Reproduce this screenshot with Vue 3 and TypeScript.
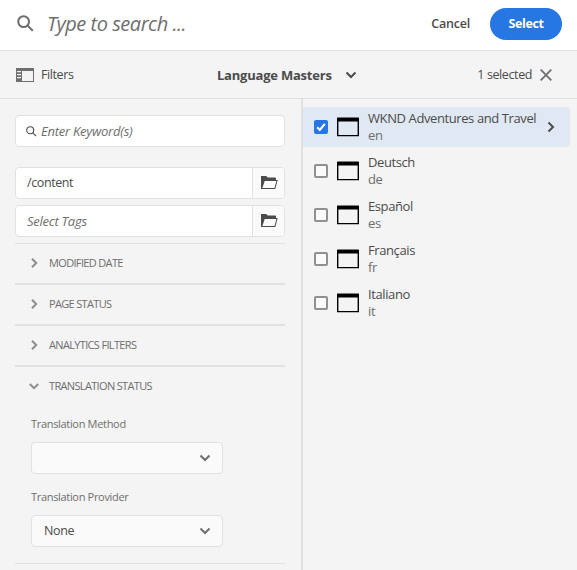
<script setup lang="ts">
import { ref } from 'vue'

interface PageItem {
  title: string
  name: string
  hasChildren: boolean
}

const sections: string[] = ['Modified Date', 'Page Status', 'Analytics Filters']

const pages: PageItem[] = [
  { title: 'WKND Adventures and Travel', name: 'en', hasChildren: true },
  { title: 'Deutsch', name: 'de', hasChildren: false },
  { title: 'Español', name: 'es', hasChildren: false },
  { title: 'Français', name: 'fr', hasChildren: false },
  { title: 'Italiano', name: 'it', hasChildren: false },
]

const selected = ref<string>('en')
const path = ref<string>('/content')
</script>

<template>
  <div class="picker">
    <header class="searchbar">
      <svg class="search-icon" width="17" height="17" viewBox="0 0 17 17">
        <circle cx="6.6" cy="6.6" r="5.4" />
        <path d="M10.6 10.6 L15.8 15.8" />
      </svg>
      <input class="search-input" placeholder="Type to search ..." />
      <button class="cancel">Cancel</button>
      <button class="select">Select</button>
    </header>

    <div class="toolbar">
      <svg class="rail-icon" width="18" height="14" viewBox="0 0 18 14">
        <path fill-rule="evenodd" d="M0 0H18V14H0Z M6 3H17V13H6Z M1 3H5V4.3H1Z M1 6H5V7.3H1Z M1 9H5V10.3H1Z" />
      </svg>
      <span class="filters">Filters</span>
      <span class="location">Language Masters</span>
      <svg class="location-arrow" width="12" height="8" viewBox="0 0 12 8">
        <path d="M1.5 1.5 L6 6 L10.5 1.5" />
      </svg>
      <span class="count">1 selected</span>
      <svg class="close" width="12" height="12" viewBox="0 0 12 12">
        <path d="M.7 .7 L11.3 11.3 M11.3 .7 L.7 11.3" />
      </svg>
    </div>

    <main class="content">
      <aside class="rail">
        <div class="field keyword">
          <svg class="keyword-icon" width="11" height="11" viewBox="0 0 11 11">
            <circle cx="4.2" cy="4.2" r="3.5" />
            <path d="M6.8 6.8 L10.1 10.1" />
          </svg>
          <input class="field-input enter" placeholder="Enter Keyword(s)" />
        </div>
        <div class="field">
          <input v-model="path" class="field-input path" />
          <span class="browse">
            <svg width="17" height="13" viewBox="0 0 17 13">
              <path fill-rule="evenodd" d="M0 0H5.2L6.8 1.5H14.2Q15 1.5 15 2.3V4H16.7L14.3 13H0Z M3.7 5L1.4 12H13.5L15.4 5Z" />
            </svg>
          </span>
        </div>
        <div class="field tags">
          <input class="field-input tag-input" placeholder="Select Tags" />
          <span class="browse">
            <svg width="17" height="13" viewBox="0 0 17 13">
              <path fill-rule="evenodd" d="M0 0H5.2L6.8 1.5H14.2Q15 1.5 15 2.3V4H16.7L14.3 13H0Z M3.7 5L1.4 12H13.5L15.4 5Z" />
            </svg>
          </span>
        </div>

        <div class="accordion">
          <div v-for="section in sections" :key="section" class="section-head">
            <svg class="arrow" width="12" height="12" viewBox="0 0 12 12">
              <path d="M4 1.8 L8.2 6 L4 10.2" />
            </svg>
            <span>{{ section }}</span>
          </div>
          <div class="section-head open">
            <svg class="arrow" width="12" height="12" viewBox="0 0 12 12">
              <path d="M1.8 4 L6 8.2 L10.2 4" />
            </svg>
            <span>Translation Status</span>
          </div>
          <div class="section-body">
            <label class="label">Translation Method</label>
            <div class="dropdown">
              <span></span>
              <svg width="12" height="8" viewBox="0 0 12 8"><path d="M1.5 1.5 L6 6 L10.5 1.5" /></svg>
            </div>
            <label class="label provider">Translation Provider</label>
            <div class="dropdown">
              <span>None</span>
              <svg width="12" height="8" viewBox="0 0 12 8"><path d="M1.5 1.5 L6 6 L10.5 1.5" /></svg>
            </div>
          </div>
        </div>
      </aside>

      <section class="column">
        <div
          v-for="page in pages"
          :key="page.name"
          class="item"
          :class="{ active: selected === page.name }"
          @click="selected = page.name"
        >
          <span class="checkbox">
            <svg v-if="selected === page.name" width="10" height="10" viewBox="0 0 10 10">
              <path d="M1.2 5.3 L3.8 8 L8.8 1.8" />
            </svg>
          </span>
          <svg class="page-icon" width="22" height="20" viewBox="0 0 22 20">
            <path fill-rule="evenodd" d="M.5 .4H21.5Q22 .4 22 1V18.7Q22 19.2 21.5 19.2H.5Q0 19.2 0 18.7V1Q0 .4 .5 .4Z M1.4 4.6H20.6V18H1.4Z" />
          </svg>
          <div class="names">
            <span class="title">{{ page.title }}</span>
            <span class="name">{{ page.name }}</span>
          </div>
          <svg v-if="page.hasChildren" class="more" width="8" height="12" viewBox="0 0 8 12">
            <path d="M1.5 1.5 L6 6 L1.5 10.5" />
          </svg>
        </div>
      </section>
    </main>
  </div>
</template>

<style>
body {
  margin: 0;
  background: #f4f4f4;
}
</style>

<style scoped>
* {
  box-sizing: border-box;
}
.picker {
  display: flex;
  flex-direction: column;
  height: 570px;
  overflow: hidden;
  background: #f4f4f4;
  color: #4b4b4b;
  font: 12.5px/16px "Open Sans", "Noto Sans", sans-serif;
  letter-spacing: -0.4px;
  white-space: nowrap;
}
svg {
  display: block;
  flex: none;
}
input,
button {
  padding: 0;
  border: 0;
  background: none;
  color: inherit;
  font: inherit;
  letter-spacing: inherit;
  outline: none;
}
.searchbar {
  display: flex;
  align-items: center;
  flex: none;
  height: 51px;
  padding: 0 15px 3px 17px;
  border-bottom: 1px solid #dedede;
  background: #fff;
}
.search-icon,
.keyword-icon {
  fill: none;
  stroke: #6e6e6e;
  stroke-width: 2;
}
.search-input {
  flex: 1;
  min-width: 0;
  height: 32px;
  margin-left: 13px;
  font-size: 20px;
  font-style: italic;
  letter-spacing: -0.47px;
}
input::placeholder {
  color: #6e6e6e;
  opacity: 1;
}
.cancel {
  margin-right: 20px;
  font-weight: 600;
  letter-spacing: -0.2px;
}
.select {
  width: 72px;
  height: 32px;
  border-radius: 16px;
  background: #2676e3;
  color: #fff;
  font-weight: 700;
}
.toolbar {
  display: flex;
  align-items: center;
  flex: none;
  height: 48px;
  padding: 0 25px 0 16px;
  border-bottom: 1px solid #dedede;
}
.rail-icon {
  fill: #6e6e6e;
}
.filters {
  width: 176px;
  padding-left: 7px;
}
.location {
  width: 135px;
  padding-left: 7px;
  font-size: 13px;
  font-weight: 700;
  letter-spacing: -0.22px;
}
.location-arrow,
.close {
  fill: none;
  stroke: #4b4b4b;
  stroke-width: 2;
}
.close {
  margin-left: 8px;
  stroke: #6e6e6e;
  stroke-width: 1.8;
}
.count {
  margin-left: auto;
}
.content {
  display: flex;
  flex: 1;
  min-height: 0;
}
.rail {
  width: 303px;
  padding: 16px 16px 0 15px;
  border-right: 2px solid #e1e1e1;
}
.field {
  display: flex;
  align-items: center;
  width: 270px;
  height: 32px;
  border: 1px solid #e1e1e1;
  border-radius: 4px;
  background: #fff;
  overflow: hidden;
}
.keyword {
  margin-bottom: 20px;
  padding-left: 10px;
}
.keyword-icon {
  stroke: #4b4b4b;
  stroke-width: 1.1;
}
.field-input {
  flex: 1;
  min-width: 0;
  height: 30px;
  padding: 0 0 1px 11px;
}
.field-input.enter {
  padding-left: 4px;
}
.enter,
.tag-input {
  font-size: 13px;
  font-style: italic;
  letter-spacing: -0.25px;
}
.tags {
  margin-top: 6px;
}
.browse {
  display: flex;
  align-items: center;
  justify-content: center;
  width: 32px;
  height: 30px;
  padding: 0 0 1px 1px;
  border-left: 1px solid #e1e1e1;
  background: #fafafa;
  fill: #4b4b4b;
}
.accordion {
  width: 270px;
  margin-top: 6px;
  border-top: 1px solid #e1e1e1;
  border-bottom: 1px solid #e1e1e1;
}
.section-head {
  display: flex;
  align-items: center;
  gap: 9px;
  height: 41px;
  padding: 0 0 2px 13px;
  border-bottom: 2px solid #e1e1e1;
  color: #6e6e6e;
  font-size: 11px;
  letter-spacing: -0.66px;
  text-transform: uppercase;
}
.section-head.open {
  border-bottom-color: transparent;
}
.arrow,
.dropdown svg {
  fill: none;
  stroke: #8e8e8e;
  stroke-width: 2;
}
.section-body {
  padding: 8px 16px 16px;
}
.label {
  display: block;
  height: 26px;
  color: #6e6e6e;
  font-size: 11px;
  letter-spacing: -0.32px;
}
.provider {
  margin-top: 15px;
}
.dropdown {
  display: flex;
  align-items: center;
  justify-content: space-between;
  width: 192px;
  height: 32px;
  padding: 0 11px 0 12px;
  border: 1px solid #e1e1e1;
  border-radius: 4px;
  background: #fafafa;
}
.dropdown svg {
  stroke: #6e6e6e;
}
.column {
  display: flex;
  flex: 1;
  flex-direction: column;
  gap: 4px;
  padding: 8px 7px 0 0;
}
.item {
  display: flex;
  align-items: center;
  height: 40px;
  padding: 0 15px 0 11px;
  border-radius: 0 4px 4px 0;
}
.item.active {
  background: #e0e8f3;
}
.checkbox {
  display: flex;
  align-items: center;
  justify-content: center;
  width: 14px;
  height: 14px;
  border: 2px solid #909090;
  border-radius: 2px;
  background: #fafafa;
}
.active .checkbox {
  border: 0;
  background: #2676e3;
}
.checkbox svg {
  fill: none;
  stroke: #fff;
  stroke-width: 2;
}
.page-icon {
  margin-left: 9px;
  fill: #000;
}
.names {
  display: flex;
  flex-direction: column;
  margin-left: 9px;
  font-size: 13px;
  line-height: 17px;
}
.name {
  color: #6e6e6e;
}
.more {
  margin-left: auto;
  fill: none;
  stroke: #4b4b4b;
  stroke-width: 2;
}
</style>
